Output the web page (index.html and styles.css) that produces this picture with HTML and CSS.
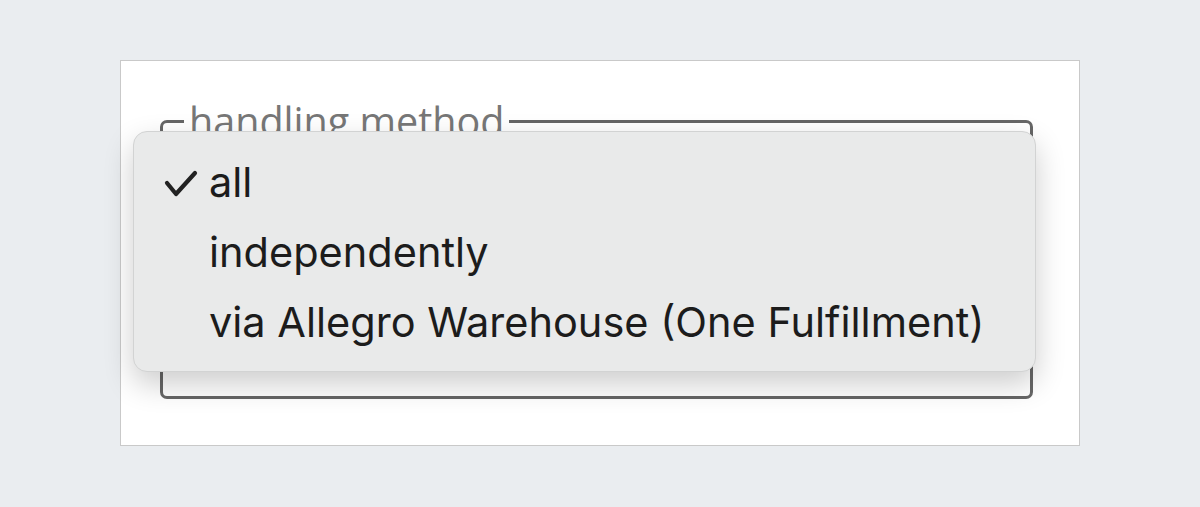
FILE: index.html
```html
<!DOCTYPE html>
<html lang="en">
  <head>
    <meta charset="UTF-8" />
    <meta name="viewport" content="width=device-width, initial-scale=1.0" />
    <title>handling method</title>
    <link rel="stylesheet" href="styles.css">
  </head>

  <body>
    <div class="card">
      <!-- select field -->
      <fieldset class="field">
        <legend class="fieldLabel">handling method</legend>
        <div class="fieldValue"></div>
      </fieldset>

      <!-- open dropdown menu -->
      <ul class="menu">
        <li class="menuItem selected">
          <svg class="check" width="34" height="28" viewBox="0 0 34 28">
            <polyline points="3,14 12,25 31,4" fill="none" stroke="#222" stroke-width="4.2" stroke-linecap="round" stroke-linejoin="round" />
          </svg>
          <span>all</span>
        </li>
        <li class="menuItem"><span>independently</span></li>
        <li class="menuItem"><span>via Allegro Warehouse (One Fulfillment)</span></li>
      </ul>
    </div>
  </body>
</html>
```

FILE: styles.css
```css
body {
  margin: 0;
  padding: 60px 120px;
  background: #eaedf0;
}

.card {
  position: relative;
  box-sizing: border-box;
  height: 386px;
  padding: 41px 46px 0 39px;
  background: #fff;
  border: 1px solid #c9c9c9;
}

.field {
  margin: 0;
  padding: 0;
  height: 297px;
  border: 3px solid #666;
  border-radius: 7px;
  box-sizing: border-box;
}

.fieldLabel {
  margin-left: 21px;
  padding: 0 5px;
  font-family: "Open Sans", sans-serif;
  font-size: 39.5px;
  line-height: 39px;
  color: #777;
}

.menu {
  position: absolute;
  left: 12px;
  top: 70px;
  width: 903px;
  height: 241px;
  box-sizing: border-box;
  margin: 0;
  padding: 15px 0 0 0;
  list-style: none;
  background: #e9eaea;
  border: 1px solid #d2d3d3;
  border-radius: 14px;
  box-shadow: 0 12px 30px rgba(0, 0, 0, 0.2);
  font-family: Inter, "Liberation Sans", sans-serif;
  font-size: 41.5px;
  color: #1c1c1c;
}

.menuItem {
  position: relative;
  height: 70px;
  line-height: 70px;
  padding-left: 75px;
}

.check {
  position: absolute;
  left: 30px;
  top: 22px;
}
```
